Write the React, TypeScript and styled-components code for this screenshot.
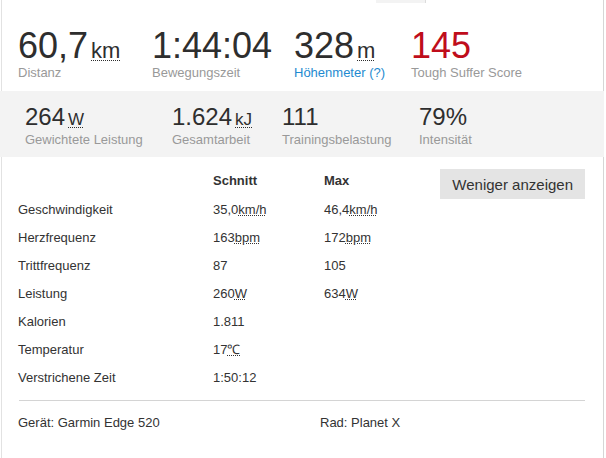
import styled, { createGlobalStyle } from "styled-components";

const GlobalStyle = createGlobalStyle`
  html, body {
    margin: 0;
    padding: 0;
    background: #fff;
  }

  body {
    font-family: "Liberation Sans", Arial, sans-serif;
    color: #333;
  }
`;

const Page = styled.div`
  width: 604px;
  min-height: 458px;
  display: flex;
  flex-direction: column;
`;

const Section = styled.section`
  margin-left: 1px;
  border-left: 1px solid #e2e2e2;
  border-right: 1px solid #d6d6d6;
`;

const TopSection = styled(Section)`
  padding: 0 0 10px 16px;
`;

const TabStub = styled.div`
  width: 49px;
  height: 3px;
  margin-left: 358px;
  background: #f3f3f3;
  border-right: 1px solid #dcdcdc;
`;

const StatsRow = styled.ul<{ $cols: string; $top?: number }>`
  list-style: none;
  margin: ${(p) => p.$top ?? 0}px 0 0;
  padding: 0;
  display: grid;
  grid-template-columns: ${(p) => p.$cols};
`;

const Stat = styled.li``;

const BigValue = styled.div<{ $red?: boolean }>`
  height: 36px;
  font-size: 36px;
  line-height: 36px;
  color: ${(p) => (p.$red ? "#bf0d1b" : "#2e2e2e")};
  white-space: nowrap;
`;

const MidValue = styled.div`
  height: 28px;
  font-size: 24px;
  line-height: 28px;
  color: #2e2e2e;
  white-space: nowrap;
`;

const Unit = styled.abbr<{ $size: number }>`
  font-size: ${(p) => p.$size}px;
  line-height: 1;
  margin-left: 3px;
  text-decoration: underline dotted;
  text-underline-offset: 2px;
  text-decoration-thickness: 1px;
`;

const StatLabel = styled.div<{ $link?: boolean }>`
  margin-top: 1px;
  font-size: 13px;
  line-height: 16px;
  color: ${(p) => (p.$link ? "#1e8ad0" : "#999")};
  white-space: nowrap;
`;

const Band = styled.section`
  background: #f3f3f3;
  padding: 12px 0 9px 25px;
`;

const Details = styled(Section)`
  flex: 1;
  padding: 10px 18px 0 16px;
`;

const DetailsHead = styled.div`
  display: flex;
  align-items: flex-start;
`;

const Table = styled.div`
  display: grid;
  grid-template-columns: 195px 111px 80px;
  grid-template-rows: 29px;
  grid-auto-rows: 28px;
  align-items: center;
  font-size: 13px;
  line-height: 16px;
  color: #333;
`;

const HeadCell = styled.div`
  align-self: start;
  padding-top: 6px;
  font-weight: bold;
`;

const Cell = styled.div``;

const SmallUnit = styled.abbr`
  text-decoration: underline dotted;
  text-underline-offset: 1px;
  text-decoration-thickness: 1px;
`;

const Toggle = styled.button`
  margin: 2px 0 0 auto;
  height: 30px;
  padding: 0 12px;
  border: none;
  background: #e4e4e4;
  color: #333;
  font-family: inherit;
  font-size: 15px;
  cursor: pointer;
`;

const Divider = styled.hr`
  margin: 8px 0 0 1px;
  border: none;
  border-top: 1px solid #d4d4d4;
`;

const Footer = styled.div`
  display: grid;
  grid-template-columns: 302px auto;
  margin-top: 14px;
  font-size: 13px;
  line-height: 16px;
  color: #333;
`;

type Row = { label: string; avg: string; max?: string; unit?: string };

const rows: Row[] = [
  { label: "Geschwindigkeit", avg: "35,0", max: "46,4", unit: "km/h" },
  { label: "Herzfrequenz", avg: "163", max: "172", unit: "bpm" },
  { label: "Trittfrequenz", avg: "87", max: "105" },
  { label: "Leistung", avg: "260", max: "634", unit: "W" },
  { label: "Kalorien", avg: "1.811" },
  { label: "Temperatur", avg: "17", unit: "℃" },
  { label: "Verstrichene Zeit", avg: "1:50:12" },
];

function Value({ v, unit }: { v?: string; unit?: string }) {
  if (!v) return <Cell />;
  return (
    <Cell>
      {v}
      {unit && <SmallUnit>{unit}</SmallUnit>}
    </Cell>
  );
}

export default function App() {
  return (
    <>
      <GlobalStyle />
      <Page>
        <TopSection>
          <TabStub />
          <StatsRow $cols="134px 142px 117px auto" $top={25}>
            <Stat>
              <BigValue>
                60,7<Unit $size={22}>km</Unit>
              </BigValue>
              <StatLabel>Distanz</StatLabel>
            </Stat>
            <Stat>
              <BigValue>1:44:04</BigValue>
              <StatLabel>Bewegungszeit</StatLabel>
            </Stat>
            <Stat>
              <BigValue>
                328<Unit $size={22}>m</Unit>
              </BigValue>
              <StatLabel $link>Höhenmeter (?)</StatLabel>
            </Stat>
            <Stat>
              <BigValue $red>145</BigValue>
              <StatLabel>Tough Suffer Score</StatLabel>
            </Stat>
          </StatsRow>
        </TopSection>

        <Band>
          <StatsRow $cols="147px 110px 137px auto">
            <Stat>
              <MidValue>
                264<Unit $size={17}>W</Unit>
              </MidValue>
              <StatLabel>Gewichtete Leistung</StatLabel>
            </Stat>
            <Stat>
              <MidValue>
                1.624<Unit $size={17}>kJ</Unit>
              </MidValue>
              <StatLabel>Gesamtarbeit</StatLabel>
            </Stat>
            <Stat>
              <MidValue>111</MidValue>
              <StatLabel>Trainingsbelastung</StatLabel>
            </Stat>
            <Stat>
              <MidValue>79%</MidValue>
              <StatLabel>Intensität</StatLabel>
            </Stat>
          </StatsRow>
        </Band>

        <Details>
          <DetailsHead>
            <Table>
              <Cell />
              <HeadCell>Schnitt</HeadCell>
              <HeadCell>Max</HeadCell>
              {rows.map((r) => (
                <>
                  <Cell key={r.label}>{r.label}</Cell>
                  <Value v={r.avg} unit={r.unit} />
                  <Value v={r.max} unit={r.unit} />
                </>
              ))}
            </Table>
            <Toggle>Weniger anzeigen</Toggle>
          </DetailsHead>
          <Divider />
          <Footer>
            <span>Gerät: Garmin Edge 520</span>
            <span>Rad: Planet X</span>
          </Footer>
        </Details>
      </Page>
    </>
  );
}
